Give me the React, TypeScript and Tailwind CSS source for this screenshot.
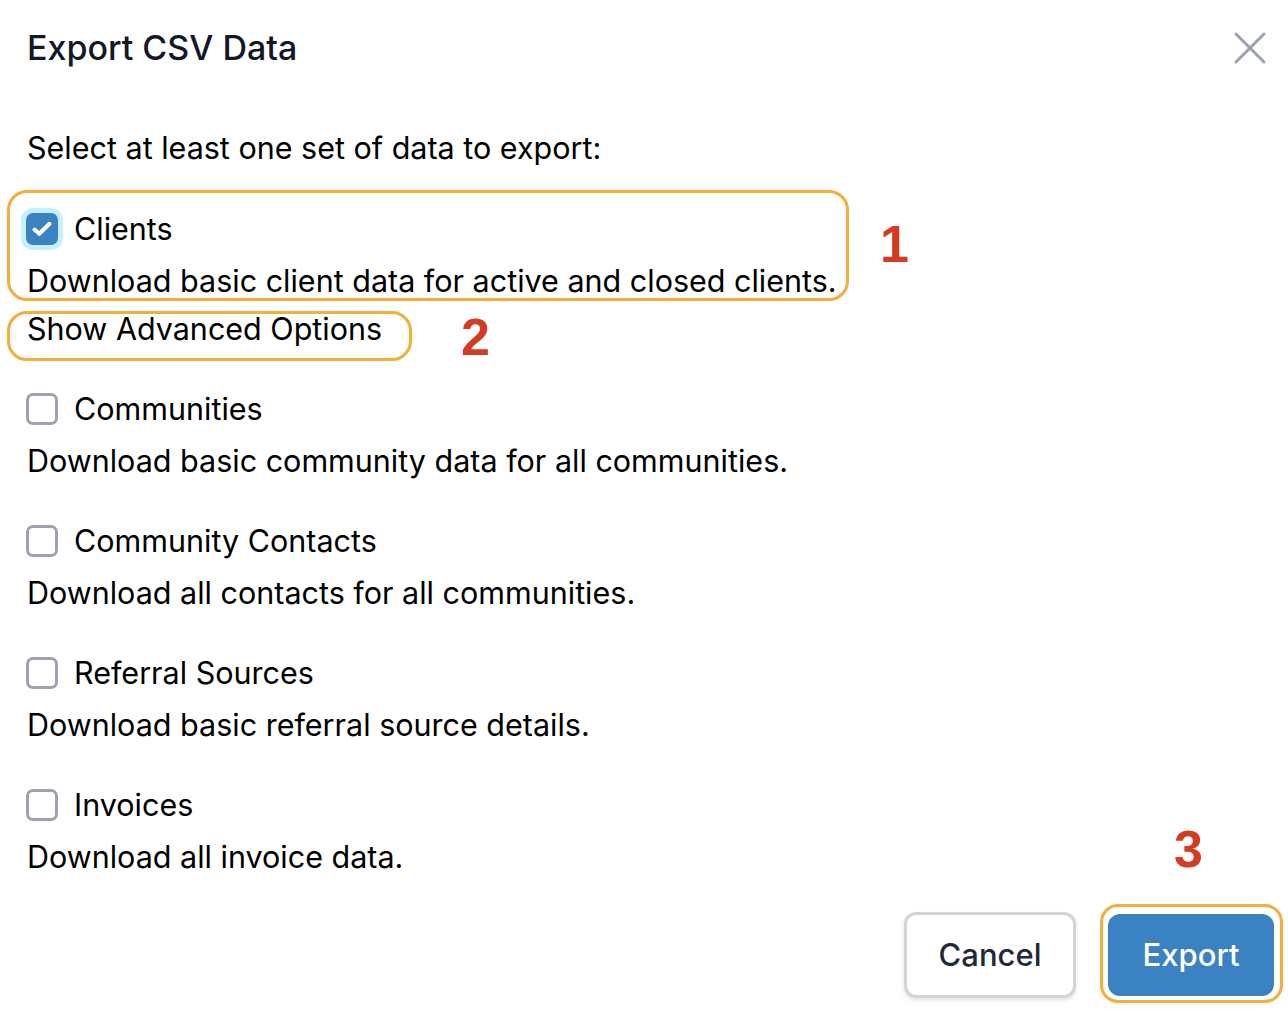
import React, { useState } from 'react';
import { X } from 'lucide-react';

type Option = { id: string; label: string; description: string };

const options: Option[] = [
    { id: 'communities', label: 'Communities', description: 'Download basic community data for all communities.' },
    { id: 'contacts', label: 'Community Contacts', description: 'Download all contacts for all communities.' },
    { id: 'referrals', label: 'Referral Sources', description: 'Download basic referral source details.' },
    { id: 'invoices', label: 'Invoices', description: 'Download all invoice data.' },
];

const Checkbox: React.FC<{ checked: boolean; onChange: () => void; focused?: boolean }> = ({ checked, onChange, focused }) => (
    <button
        type="button"
        onClick={onChange}
        className={`flex h-[32px] w-[32px] shrink-0 items-center justify-center rounded-[7px] ${
            checked ? 'bg-[#3b82c2]' : 'border-[3px] border-[#9ca3af] bg-white'
        } ${focused ? 'ring-[5px] ring-[#c4f1fd]' : ''}`}
    >
        {checked && (
            <svg width="22" height="18" viewBox="0 0 22 18" fill="none">
                <path d="M3.5 9.5 L8.3 13.8 L18.5 3.8" stroke="white" strokeWidth="4" strokeLinecap="round" strokeLinejoin="round" />
            </svg>
        )}
    </button>
);

export default function App() {
    const [selected, setSelected] = useState<Record<string, boolean>>({ clients: true });
    const toggle = (id: string) => setSelected((s) => ({ ...s, [id]: !s[id] }));

    return (
        <div className="relative h-[1010px] w-[1288px] overflow-hidden bg-white font-['Inter',sans-serif] text-black">
            <div className="flex h-[69px] items-start justify-between pl-[27px] pr-[10px] pt-[27px]">
                <h2 className="text-[34px] font-medium leading-[42px] text-[#111827]">Export CSV Data</h2>
                <button type="button" className="-mt-[7px] text-[#9ca3af]">
                    <X size={56} strokeWidth={1.3} />
                </button>
            </div>

            <div className="px-[26px] pt-[61px] text-[30.5px] leading-[36px]">
                <p className="pl-[1px]">Select at least one set of data to export:</p>

                <div className="mt-[45px]">
                    <label className="flex h-[36px] items-center gap-[16px]">
                        <Checkbox checked={!!selected.clients} onChange={() => toggle('clients')} focused />
                        <span>Clients</span>
                    </label>
                    <p className="mt-[16px] pl-[1px]">Download basic client data for active and closed clients.</p>
                </div>

                <button type="button" className="mt-[12px] block h-[36px] pl-[1px]">
                    Show Advanced Options
                </button>

                {options.map((o) => (
                    <div key={o.id} className="mt-[44px]">
                        <label className="flex h-[36px] items-center gap-[16px]">
                            <Checkbox checked={!!selected[o.id]} onChange={() => toggle(o.id)} />
                            <span>{o.label}</span>
                        </label>
                        <p className="mt-[16px] pl-[1px]">{o.description}</p>
                    </div>
                ))}
            </div>

            <div className="absolute bottom-[12px] right-[14px] flex items-center gap-[32px]">
                <button
                    type="button"
                    className="h-[86px] w-[172px] rounded-[12px] border-[3px] border-[#d1d5db] bg-white text-[31px] font-medium text-[#1f2937] shadow-[0_2px_4px_rgba(0,0,0,0.12)]"
                >
                    Cancel
                </button>
                <button
                    type="button"
                    className="h-[82px] w-[166px] rounded-[12px] bg-[#3b82c2] text-[31px] font-medium text-white"
                >
                    Export
                </button>
            </div>

            {/* annotation overlays */}
            <div className="pointer-events-none absolute left-[7px] top-[190px] h-[111px] w-[842px] rounded-[20px] border-[3px] border-[#f5ad3c]" />
            <div className="pointer-events-none absolute left-[7px] top-[311px] h-[50px] w-[405px] rounded-[20px] border-[3px] border-[#f5ad3c]" />
            <div className="pointer-events-none absolute left-[1100px] top-[904px] h-[99px] w-[183px] rounded-[18px] border-[3px] border-[#f5ad3c]" />
            <span className="pointer-events-none absolute left-[880px] top-[218px] font-['Liberation_Sans',sans-serif] text-[52px] font-bold leading-[52px] text-[#d33b24]">1</span>
            <span className="pointer-events-none absolute left-[461px] top-[311px] font-['Liberation_Sans',sans-serif] text-[52px] font-bold leading-[52px] text-[#d33b24]">2</span>
            <span className="pointer-events-none absolute left-[1174px] top-[823px] font-['Liberation_Sans',sans-serif] text-[52px] font-bold leading-[52px] text-[#d33b24]">3</span>
        </div>
    );
}
